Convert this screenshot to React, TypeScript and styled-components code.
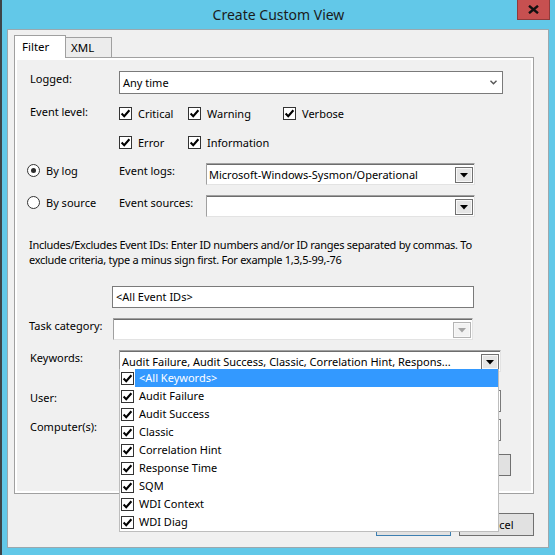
import React from "react";
import styled, { createGlobalStyle } from "styled-components";

const GlobalStyle = createGlobalStyle`
  html, body {
    margin: 0;
    padding: 0;
  }
  body {
    background: #62c8e8;
    font-family: "Noto Sans", "DejaVu Sans", sans-serif;
    font-size: 11px;
    color: #000;
  }
`;

const Window = styled.div`
  width: 555px;
  height: 555px;
  box-sizing: border-box;
  background: #62c8e8;
  border-left: 2px solid #3d4448;
  padding: 0 6px 7px 5px;
  display: flex;
  flex-direction: column;
  overflow: hidden;
`;

const TitleBar = styled.div`
  height: 29px;
  margin: 0 -6px 0 -5px;
  display: grid;
  grid-template-columns: 1fr auto 1fr;
  align-items: start;
`;

const Title = styled.div`
  grid-column: 2;
  font-size: 14px;
  line-height: 29px;
  color: #1b1b1b;
`;

const CloseButton = styled.div`
  grid-column: 3;
  justify-self: end;
  margin-right: 5px;
  width: 33px;
  height: 20px;
  box-sizing: border-box;
  background: #c75050;
  border: 1px solid #8e3b3b;
  border-top: none;
  display: flex;
  align-items: center;
  justify-content: center;
`;

const Client = styled.div`
  flex: 1;
  background: #f0f0f0;
  border: 1px solid #9aa8ae;
  display: flex;
  flex-direction: column;
`;

const TabStrip = styled.div`
  display: flex;
  align-items: flex-end;
  margin: 5px 0 0 6px;
  height: 22px;
`;

const Tab = styled.div<{ $active?: boolean }>`
  box-sizing: border-box;
  border: 1px solid #a0a0a0;
  border-bottom: none;
  height: ${(p) => (p.$active ? 23 : 20)}px;
  width: ${(p) => (p.$active ? 52 : 47)}px;
  margin-left: ${(p) => (p.$active ? 0 : -1)}px;
  margin-bottom: ${(p) => (p.$active ? -1 : 0)}px;
  padding: ${(p) => (p.$active ? "3px 0 0 7px" : "2px 0 0 5px")};
  background: ${(p) => (p.$active ? "#fff" : "#ececec")};
  position: relative;
  z-index: ${(p) => (p.$active ? 2 : 0)};
  line-height: 15px;
  font-size: 11.5px;
`;

const Panel = styled.div`
  margin-left: 6px;
  width: 520px;
  height: 437px;
  box-sizing: border-box;
  border: 1px solid #a0a0a0;
  box-shadow: inset 0 0 0 2px #fff;
  padding: 0 0 0 12px;
  display: flex;
  flex-direction: column;
  position: relative;
  z-index: 1;
`;

const Row = styled.div<{ $mt: number; $h?: number; $ml?: number }>`
  display: flex;
  align-items: flex-start;
  margin-top: ${(p) => p.$mt}px;
  margin-left: ${(p) => p.$ml ?? 0}px;
  height: ${(p) => (p.$h ? `${p.$h}px` : "auto")};
`;

const Label = styled.div<{ $w: number; $pl?: number }>`
  width: ${(p) => p.$w}px;
  padding-left: ${(p) => p.$pl ?? 3}px;
  box-sizing: border-box;
  flex-shrink: 0;
  line-height: 15px;
  white-space: nowrap;
`;

const FlatSelect = styled.div<{ $w: number }>`
  width: ${(p) => p.$w}px;
  height: 23px;
  box-sizing: border-box;
  border: 1px solid #7a7a7a;
  background: #fff;
  display: flex;
  align-items: center;
  justify-content: space-between;
  padding: 0 5px 0 3px;
`;

const Combo = styled.div<{ $w: number }>`
  width: ${(p) => p.$w}px;
  height: 22px;
  box-sizing: border-box;
  border: 1px solid;
  border-color: #a0a0a0 #e3e3e3 #e3e3e3 #a0a0a0;
  box-shadow: inset 0 1px 0 #6d6d6d;
  background: #fff;
  display: flex;
  align-items: center;
  padding-left: 2px;
  position: relative;
`;

const ComboText = styled.span`
  flex: 1;
  white-space: nowrap;
  overflow: hidden;
`;

const ComboButton = styled.div<{ $disabled?: boolean }>`
  width: 18px;
  height: 16px;
  box-sizing: border-box;
  margin: 1px 1px 0 0;
  border: 1px solid ${(p) => (p.$disabled ? "#b4b4b4" : "#707070")};
  box-shadow: inset 0 0 0 1px #f8f8f8;
  background: ${(p) => (p.$disabled ? "#f2f2f2" : "#e5e5e5")};
  display: flex;
  align-items: center;
  justify-content: center;
  padding-top: 2px;
`;

const TextBox = styled.div<{ $w: number }>`
  width: ${(p) => p.$w}px;
  height: 22px;
  box-sizing: border-box;
  border: 1px solid #7a7a7a;
  background: #fff;
  padding-left: 3px;
  line-height: 20px;
`;

const CheckGrid = styled.div`
  display: grid;
  grid-template-columns: 69px 95px auto;
  grid-auto-rows: 18px;
  row-gap: 11px;
`;

const CheckItem = styled.label`
  display: flex;
  align-items: center;
  gap: 6px;
  line-height: 15px;
`;

const Box = styled.span`
  width: 13px;
  height: 13px;
  box-sizing: border-box;
  border: 1px solid #333;
  background: #fff;
  display: flex;
  align-items: center;
  justify-content: center;
  flex-shrink: 0;
`;

const RadioGroup = styled.div`
  width: 92px;
  flex-shrink: 0;
  display: flex;
  align-items: flex-start;
  gap: 6px;
  line-height: 15px;
  white-space: nowrap;
`;

const RadioDot = styled.span<{ $on?: boolean }>`
  width: 13px;
  height: 13px;
  box-sizing: border-box;
  border-radius: 50%;
  border: 1px solid #333;
  background: #fff;
  margin-top: 1px;
  display: flex;
  align-items: center;
  justify-content: center;
  &::after {
    content: "";
    width: 5px;
    height: 5px;
    border-radius: 50%;
    background: ${(p) => (p.$on ? "#2b2b2b" : "transparent")};
  }
`;

const Description = styled.div`
  margin-top: 20px;
  padding-left: 2px;
  line-height: 15px;
  letter-spacing: -0.28px;
  white-space: nowrap;
`;

const ButtonRow = styled.div<{ $mt: number; $pr: number }>`
  display: flex;
  justify-content: flex-end;
  gap: 8px;
  margin-top: ${(p) => p.$mt}px;
  padding-right: ${(p) => p.$pr}px;
`;

const PushButton = styled.div<{ $default?: boolean; $h?: number }>`
  width: 75px;
  height: ${(p) => p.$h ?? 23}px;
  box-sizing: border-box;
  border: 1px solid ${(p) => (p.$default ? "#3c7fb1" : "#707070")};
  background: #e1e1e1;
  display: flex;
  align-items: center;
  justify-content: center;
`;

const DropList = styled.div`
  position: absolute;
  top: 18px;
  left: -1px;
  width: 380px;
  box-sizing: border-box;
  border: 1px solid #bdbdbd;
  border-top: none;
  background: #fff;
  z-index: 10;
`;

const ListItem = styled.div`
  height: 18px;
  display: flex;
  align-items: center;
  padding-left: 1px;
  gap: 1px;
`;

const ListText = styled.span<{ $selected?: boolean }>`
  flex: 1;
  height: 18px;
  line-height: 18px;
  padding-left: 4px;
  background: ${(p) => (p.$selected ? "#3399ff" : "transparent")};
  color: ${(p) => (p.$selected ? "#fff" : "#000")};
`;

const CheckMark = () => (
  <svg width="11" height="11" viewBox="0 0 11 11">
    <path d="M1.6 5.6 L4.2 8.2 L9.4 2.2" fill="none" stroke="#000" strokeWidth="2.1" />
  </svg>
);

const CheckBox = () => (
  <Box>
    <CheckMark />
  </Box>
);

const Arrow = ({ color = "#000" }: { color?: string }) => (
  <svg width="8" height="5" viewBox="0 0 8 5">
    <polygon points="0,0 8,0 4,4.5" fill={color} />
  </svg>
);

const Chevron = () => (
  <svg width="7" height="5" viewBox="0 0 7 5">
    <polyline points="0.5,0.8 3.5,3.8 6.5,0.8" fill="none" stroke="#555" strokeWidth="1.4" />
  </svg>
);

const keywords = [
  "<All Keywords>",
  "Audit Failure",
  "Audit Success",
  "Classic",
  "Correlation Hint",
  "Response Time",
  "SQM",
  "WDI Context",
  "WDI Diag",
];

export default function App() {
  return (
    <>
      <GlobalStyle />
      <Window>
        <TitleBar>
          <Title>Create Custom View</Title>
          <CloseButton>
            <svg width="11" height="9" viewBox="0 0 11 9">
              <path d="M1 0.8 L10 8.2 M10 0.8 L1 8.2" stroke="#111" strokeWidth="2.4" />
            </svg>
          </CloseButton>
        </TitleBar>
        <Client>
          <TabStrip>
            <Tab $active>Filter</Tab>
            <Tab>XML</Tab>
          </TabStrip>
          <Panel>
            <Row $mt={13} $h={23}>
              <Label $w={92}>Logged:</Label>
              <FlatSelect $w={384}>
                <span>Any time</span>
                <Chevron />
              </FlatSelect>
            </Row>

            <Row $mt={10}>
              <Label $w={92}>Event level:</Label>
              <CheckGrid>
                <CheckItem>
                  <CheckBox />
                  Critical
                </CheckItem>
                <CheckItem>
                  <CheckBox />
                  Warning
                </CheckItem>
                <CheckItem>
                  <CheckBox />
                  Verbose
                </CheckItem>
                <CheckItem>
                  <CheckBox />
                  Error
                </CheckItem>
                <CheckItem>
                  <CheckBox />
                  Information
                </CheckItem>
              </CheckGrid>
            </Row>

            <Row $mt={12} $h={22}>
              <RadioGroup>
                <RadioDot $on />
                By log
              </RadioGroup>
              <Label $w={87} $pl={0}>
                Event logs:
              </Label>
              <Combo $w={269}>
                <ComboText>Microsoft-Windows-Sysmon/Operational</ComboText>
                <ComboButton>
                  <Arrow />
                </ComboButton>
              </Combo>
            </Row>

            <Row $mt={10} $h={22}>
              <RadioGroup>
                <RadioDot />
                By source
              </RadioGroup>
              <Label $w={87} $pl={0}>
                Event sources:
              </Label>
              <Combo $w={269}>
                <ComboText />
                <ComboButton>
                  <Arrow />
                </ComboButton>
              </Combo>
            </Row>

            <Description>
              Includes/Excludes Event IDs: Enter ID numbers and/or ID ranges separated by commas. To
              <br />
              exclude criteria, type a minus sign first. For example 1,3,5-99,-76
            </Description>

            <Row $mt={19} $h={22} $ml={85}>
              <TextBox $w={362}>&lt;All Event IDs&gt;</TextBox>
            </Row>

            <Row $mt={10} $h={22}>
              <Label $w={86} $pl={2}>
                Task category:
              </Label>
              <Combo $w={360}>
                <ComboText />
                <ComboButton $disabled>
                  <Arrow color="#a3a3a3" />
                </ComboButton>
              </Combo>
            </Row>

            <Row $mt={10} $h={22}>
              <Label $w={92}>Keywords:</Label>
              <Combo $w={382}>
                <ComboText>Audit Failure, Audit Success, Classic, Correlation Hint, Respons...</ComboText>
                <ComboButton>
                  <Arrow />
                </ComboButton>
                <DropList>
                  {keywords.map((k, i) => (
                    <ListItem key={k}>
                      <CheckBox />
                      <ListText $selected={i === 0}>{k}</ListText>
                    </ListItem>
                  ))}
                </DropList>
              </Combo>
            </Row>

            <Row $mt={18} $h={22}>
              <Label $w={92}>User:</Label>
              <TextBox $w={382} />
            </Row>

            <Row $mt={7} $h={22}>
              <Label $w={92}>Computer(s):</Label>
              <TextBox $w={382} />
            </Row>

            <ButtonRow $mt={13} $pr={22}>
              <PushButton $h={22}>Clear</PushButton>
            </ButtonRow>
          </Panel>

          <ButtonRow $mt={19} $pr={14}>
            <PushButton $default>OK</PushButton>
            <PushButton>Cancel</PushButton>
          </ButtonRow>
        </Client>
      </Window>
    </>
  );
}
